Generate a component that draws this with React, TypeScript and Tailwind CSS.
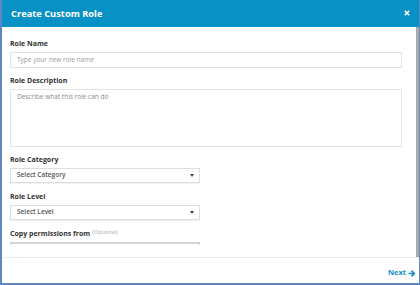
import React from "react";

const font = { fontFamily: '"Open Sans", "Liberation Sans", sans-serif' };

function Select({ text }: { text: string }) {
  return (
    <div className="flex h-[15px] w-[190px] items-center justify-between border border-[#dedede] bg-white pl-[6px] pr-[5px] shadow-[0_1px_1px_rgba(0,0,0,0.05)]">
      <span className="text-[6.5px] font-semibold leading-none text-[#555]">{text}</span>
      <svg width="4" height="3" viewBox="0 0 4 3">
        <path d="M0 0 L4 0 L2 3 Z" fill="#444" />
      </svg>
    </div>
  );
}

function Label({ children }: { children: React.ReactNode }) {
  return (
    <div className="mb-[4px] flex h-[10px] items-center text-[7px] font-bold leading-none text-[#333]">
      {children}
    </div>
  );
}

export default function App() {
  return (
    <div
      style={font}
      className="flex h-[285px] w-[420px] flex-col overflow-hidden border-b-2 border-l-2 border-r border-[#5f86c6] bg-white"
    >
      <div className="flex h-[27px] shrink-0 items-center justify-between bg-[#0791c4] pl-[9px] pr-[9px]">
        <span className="text-[9.3px] font-bold text-white">Create Custom Role</span>
        <svg width="6" height="6" viewBox="0 0 6 6" className="mb-[1px]">
          <path d="M0.8 0.8 L5.2 5.2 M5.2 0.8 L0.8 5.2" stroke="white" strokeWidth="1.6" />
        </svg>
      </div>
      <div className="flex min-h-0 flex-1">
        <div className="min-w-0 flex-1 overflow-hidden pl-[8px] pr-[14px] pt-[11px]">
          <Label>Role Name</Label>
          <div className="mb-[7px] flex h-[16px] items-center border border-[#e2e2e2] pl-[6px]">
            <span className="text-[6.5px] leading-none text-[#9a9a9a]">Type your new role name</span>
          </div>
          <Label>Role Description</Label>
          <div className="mb-[7px] h-[58px] border border-[#e2e2e2] pl-[6px] pt-[4px]">
            <span className="block text-[6.5px] leading-none text-[#8a8a8a]">Describe what this role can do</span>
          </div>
          <Label>Role Category</Label>
          <div className="mb-[8px]">
            <Select text="Select Category" />
          </div>
          <Label>Role Level</Label>
          <div className="mb-[8px]">
            <Select text="Select Level" />
          </div>
          <Label>
            Copy permissions from
            <span className="ml-[2px] text-[5.5px] font-normal text-[#aaa]">(Optional)</span>
          </Label>
          <div className="h-[3px] w-[190px] border-t-2 border-l border-r border-[#d4d4d4]" />
        </div>
        <div className="w-[3px] shrink-0 bg-[#a9a9a9]" />
      </div>
      <div className="flex h-[26px] shrink-0 items-center justify-end border-t border-[#eeeeee] pr-[4px] pt-[5px]">
        <span className="text-[7.5px] font-bold text-[#1590c8]">Next</span>
        <svg width="7" height="7" viewBox="0 0 10 10" className="ml-[2px]">
          <path d="M5 1 L9 5 L5 9 M8.5 5 L1 5" stroke="#1590c8" strokeWidth="2.4" fill="none" strokeLinejoin="miter" />
        </svg>
      </div>
    </div>
  );
}
